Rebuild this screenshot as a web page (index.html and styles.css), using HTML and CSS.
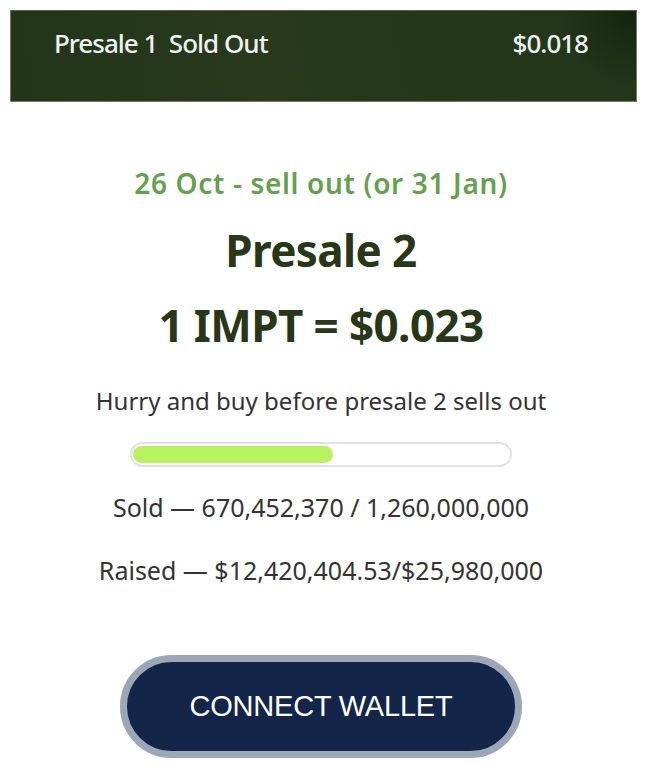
FILE: index.html
```html
<!DOCTYPE html>
<html lang="en">

<head>
    <meta charset="UTF-8">
    <meta name="viewport" content="width=device-width, initial-scale=1.0">
    <title>Presale</title>
    <link rel="stylesheet" href="styles.css">
</head>

<body>
    <div class="banner">
        <span class="banner-title">Presale 1&nbsp; Sold Out</span>
        <span class="banner-price">$0.018</span>
    </div>

    <div class="presale">
        <p class="dates">26 Oct - sell out (or 31 Jan)</p>
        <h2 class="stage">Presale 2</h2>
        <h2 class="rate">1 IMPT = $0.023</h2>
        <p class="hurry">Hurry and buy before presale 2 sells out</p>

        <div class="progress">
            <div class="progress-fill" style="width: 53.2%"></div>
        </div>

        <p class="stat">Sold — 670,452,370 / 1,260,000,000</p>
        <p class="stat">Raised — $12,420,404.53/$25,980,000</p>

        <button class="btn-connect">CONNECT WALLET</button>
    </div>
</body>

</html>
```

FILE: styles.css
```css
* {
    margin: 0;
    padding: 0;
    box-sizing: border-box;
}

body {
    font-family: 'Noto Sans', 'Open Sans', sans-serif;
    background: white;
    width: 650px;
    height: 778px;
    overflow: hidden;
}

.banner {
    margin: 10px 13px 0 10px;
    height: 92px;
    background: radial-gradient(circle at 100% 0%, #142410 0, #22361a 12%, #28391c 60%, #233519 100%);
    border: 1px solid #6f7d63;
    border-top-color: #556449;
    display: flex;
    justify-content: space-between;
    padding: 19px 48px 0 43px;
    color: #eef1f2;
    font-size: 26px;
    font-weight: 500;
    line-height: 1;
    letter-spacing: -1px;
}

.presale {
    display: flex;
    flex-direction: column;
    align-items: center;
    text-align: center;
    padding-right: 8px;
}

.dates {
    margin-top: 67px;
    color: #65a04f;
    font-size: 28px;
    line-height: 1;
    font-weight: 600;
    letter-spacing: 0.65px;
}

.stage,
.rate {
    color: #283718;
    font-size: 44px;
    font-weight: 700;
    letter-spacing: -0.6px;
    line-height: 1;
}

.stage {
    margin-top: 31px;
}

.rate {
    margin-top: 31px;
}

.hurry {
    margin-top: 42px;
    color: #333;
    font-size: 24px;
    line-height: 1;
}

.progress {
    margin-top: 29px;
    width: 382px;
    height: 25px;
    border: 2px solid #e2e2e2;
    border-radius: 13px;
    padding: 2px 2px 2px 1px;
    background: white;
}

.progress-fill {
    height: 100%;
    background: #b7f263;
    border-radius: 10px;
}

.stat {
    color: #333;
    font-size: 25px;
    line-height: 1;
    margin-top: 28px;
}

.stat + .stat {
    margin-top: 38px;
}

.btn-connect {
    margin-top: 72px;
    width: 402px;
    height: 103px;
    border-radius: 52px;
    border: 7px solid #9ba7b7;
    background: #13264a;
    color: white;
    font-family: 'Liberation Sans', Arial, sans-serif;
    font-size: 29px;
    letter-spacing: -0.2px;
    cursor: pointer;
}
```
